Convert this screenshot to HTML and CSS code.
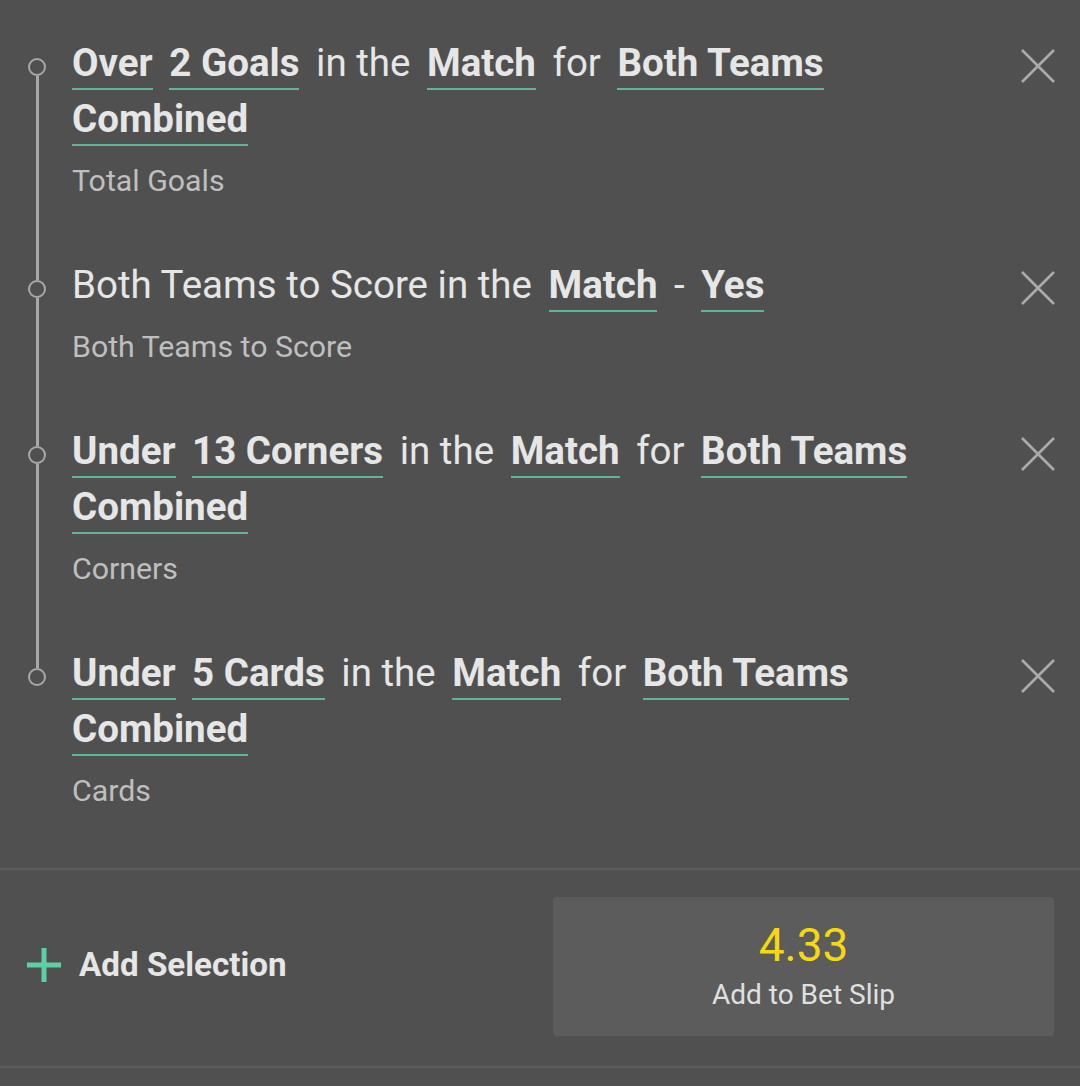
FILE: index.html
```html
<!DOCTYPE html>
<html lang="en">
<head>
<meta charset="utf-8">
<title>Bet Builder</title>
<link rel="stylesheet" href="styles.css">
</head>
<body>
<div class="panel">
  <ul class="legs">
    <li class="leg first">
      <div class="rail"><span class="seg"></span><span class="dot"></span><span class="seg grow"></span></div>
      <div class="body">
        <p class="desc"><span class="tok u">Over</span> <span class="tok u">2 Goals</span> <span class="tok">in the</span> <span class="tok u">Match</span> <span class="tok">for</span> <span class="tok u">Both Teams Combined</span></p>
        <p class="market">Total Goals</p>
      </div>
      <button class="close" aria-label="Remove"><svg viewBox="0 0 34 34" width="34" height="34"><path d="M1 1L33 33M33 1L1 33"/></svg></button>
    </li>
    <li class="leg">
      <div class="rail"><span class="seg"></span><span class="dot"></span><span class="seg grow"></span></div>
      <div class="body">
        <p class="desc"><span class="tok">Both Teams to Score in the</span> <span class="tok u">Match</span> <span class="tok">-</span> <span class="tok u">Yes</span></p>
        <p class="market">Both Teams to Score</p>
      </div>
      <button class="close" aria-label="Remove"><svg viewBox="0 0 34 34" width="34" height="34"><path d="M1 1L33 33M33 1L1 33"/></svg></button>
    </li>
    <li class="leg">
      <div class="rail"><span class="seg"></span><span class="dot"></span><span class="seg grow"></span></div>
      <div class="body">
        <p class="desc"><span class="tok u">Under</span> <span class="tok u">13 Corners</span> <span class="tok">in the</span> <span class="tok u">Match</span> <span class="tok">for</span> <span class="tok u">Both Teams Combined</span></p>
        <p class="market">Corners</p>
      </div>
      <button class="close" aria-label="Remove"><svg viewBox="0 0 34 34" width="34" height="34"><path d="M1 1L33 33M33 1L1 33"/></svg></button>
    </li>
    <li class="leg last">
      <div class="rail"><span class="seg"></span><span class="dot"></span><span class="seg grow"></span></div>
      <div class="body">
        <p class="desc"><span class="tok u">Under</span> <span class="tok u">5 Cards</span> <span class="tok">in the</span> <span class="tok u">Match</span> <span class="tok">for</span> <span class="tok u">Both Teams Combined</span></p>
        <p class="market">Cards</p>
      </div>
      <button class="close" aria-label="Remove"><svg viewBox="0 0 34 34" width="34" height="34"><path d="M1 1L33 33M33 1L1 33"/></svg></button>
    </li>
  </ul>
  <div class="footer">
    <button class="add-sel">
      <svg viewBox="0 0 34 34" width="34" height="34"><path d="M17 0V34M0 17H34"/></svg>
      <span>Add Selection</span>
    </button>
    <button class="slip">
      <span class="odds">4.33</span>
      <span class="slip-label">Add to Bet Slip</span>
    </button>
  </div>
</div>
</body>
</html>
```
FILE: styles.css
```css
* { box-sizing: border-box; }
html, body {
  margin: 0;
  padding: 0;
  background: #505050;
}
body {
  font-family: Roboto, "Liberation Sans", sans-serif;
  color: #e6e6e6;
  width: 1080px;
  height: 1086px;
  overflow: hidden;
}
.panel { display: flex; flex-direction: column; }
.legs {
  list-style: none;
  margin: 0;
  padding: 35px 0 0 0;
}
.leg {
  display: grid;
  grid-template-columns: 72px 1fr 84px;
}
.rail {
  display: flex;
  flex-direction: column;
  align-items: center;
  padding-left: 2px;
}
.seg {
  width: 3px;
  height: 23px;
  background: #a8a8a8;
  flex: none;
}
.seg.grow { flex: 1 1 auto; height: auto; }
.first .seg:first-child { visibility: hidden; }
.last .seg.grow { visibility: hidden; }
.dot {
  width: 18px;
  height: 18px;
  border: 2px solid #a8a8a8;
  border-radius: 50%;
  flex: none;
}
.body {
  padding-bottom: 56px;
  padding-right: 6px;
}
.last .body { padding-bottom: 57px; }
.desc {
  margin: 0;
  font-size: 38.5px;
  line-height: 56px;
  color: #e6e6e6;
}
.tok { margin-right: 7px; }
.tok.u {
  font-weight: 700;
  border-bottom: 2px solid #5fb594;
  padding-bottom: 3px;
}
.market {
  margin: 14px 0 0 0;
  font-size: 30.3px;
  line-height: 40px;
  color: #bfbfbf;
}
.close {
  align-self: start;
  justify-self: center;
  margin-top: 14px;
  padding: 0;
  width: 34px;
  height: 34px;
  background: none;
  border: 0;
  display: flex;
}
.close svg path {
  stroke: #ababab;
  stroke-width: 2.6;
  fill: none;
}
.footer {
  display: flex;
  align-items: center;
  border-top: 2px solid #5c5c5c;
  border-bottom: 2px solid #5c5c5c;
  padding: 27px 26px 30px 27px;
}
.add-sel {
  display: flex;
  align-items: center;
  gap: 18px;
  background: none;
  border: 0;
  padding: 0 0 4px 0;
  font-family: Roboto, "Liberation Sans", sans-serif;
  font-weight: 700;
  font-size: 33.2px;
  color: #e6e6e6;
}
.add-sel svg path {
  stroke: #5ccfa5;
  stroke-width: 5;
  fill: none;
}
.slip {
  margin-left: auto;
  width: 501px;
  height: 139px;
  background: #5c5c5c;
  border: 0;
  border-radius: 4px;
  display: flex;
  flex-direction: column;
  align-items: center;
  padding: 23px 0 0 0;
  font-family: Roboto, "Liberation Sans", sans-serif;
}
.odds {
  font-size: 46px;
  line-height: 50px;
  color: #f6d80f;
}
.slip-label {
  margin-top: 7px;
  font-size: 28px;
  line-height: 36px;
  color: #e0e0e0;
}
```
